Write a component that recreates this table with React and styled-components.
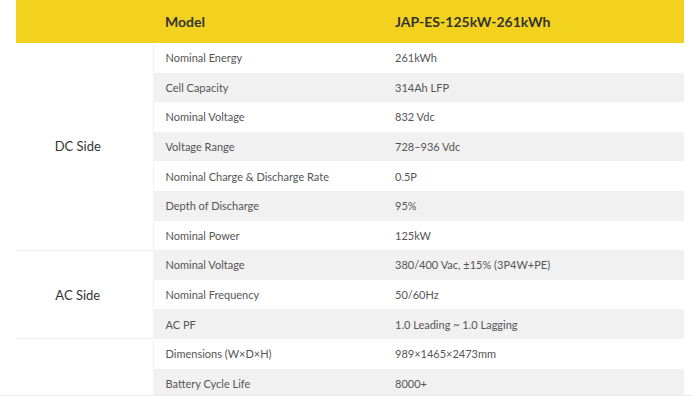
import styled, { createGlobalStyle } from "styled-components";

const GlobalStyle = createGlobalStyle`
  html, body {
    margin: 0;
    padding: 0;
    background: #fff;
  }
  body {
    font-family: Lato, "Open Sans", "Liberation Sans", sans-serif;
    height: 396px;
    overflow: hidden;
  }
`;

const groups = [
  {
    name: "DC Side",
    rows: [
      ["Nominal Energy", "261kWh"],
      ["Cell Capacity", "314Ah LFP"],
      ["Nominal Voltage", "832 Vdc"],
      ["Voltage Range", "728–936 Vdc"],
      ["Nominal Charge & Discharge Rate", "0.5P"],
      ["Depth of Discharge", "95%"],
      ["Nominal Power", "125kW"],
    ],
  },
  {
    name: "AC Side",
    rows: [
      ["Nominal Voltage", "380/400 Vac, ±15% (3P4W+PE)"],
      ["Nominal Frequency", "50/60Hz"],
      ["AC PF", "1.0 Leading ~ 1.0 Lagging"],
    ],
  },
  {
    name: "",
    rows: [
      ["Dimensions (W×D×H)", "989×1465×2473mm"],
      ["Battery Cycle Life", "8000+"],
    ],
  },
];

function App() {
  let index = 0;
  return (
    <>
      <GlobalStyle />
      <Page>
        <Table>
          <colgroup>
            <col style={{ width: 137 }} />
            <col style={{ width: 230 }} />
            <col />
          </colgroup>
          <thead>
            <tr>
              <HeadCell />
              <HeadCell>Model</HeadCell>
              <HeadCell>JAP-ES-125kW-261kWh</HeadCell>
            </tr>
          </thead>
          <tbody>
            {groups.map((group) =>
              group.rows.map(([label, value], i) => {
                index += 1;
                const striped = index % 2 === 0;
                return (
                  <Row key={group.name + label}>
                    {i === 0 && (
                      <GroupCell rowSpan={group.rows.length}>
                        {group.name}
                      </GroupCell>
                    )}
                    <Cell $striped={striped}>{label}</Cell>
                    <Cell $striped={striped}>{value}</Cell>
                  </Row>
                );
              })
            )}
          </tbody>
        </Table>
        <BottomLine />
      </Page>
    </>
  );
}

export default App;

const Page = styled.div`
  position: relative;
  height: 396px;
  padding: 0 8px 0 16px;
  overflow: hidden;
`;

const Table = styled.table`
  width: 668px;
  border-collapse: collapse;
  table-layout: fixed;
`;

const HeadCell = styled.th`
  height: 43px;
  padding: 0 12px;
  background-color: #f3d11f;
  color: #333;
  font-size: 14px;
  font-weight: 700;
  text-align: left;
  vertical-align: middle;
`;

const Row = styled.tr`
  height: 29.6px;
`;

const GroupCell = styled.td`
  padding: 0 13px 0 0;
  text-align: center;
  vertical-align: middle;
  font-size: 13px;
  color: #333;
  border-bottom: 1px solid #f1f1f1;
  border-right: 1px solid #f1f1f1;
`;

const Cell = styled.td`
  height: 29.6px;
  padding: 0 12px;
  font-size: 11px;
  color: #555;
  white-space: nowrap;
  vertical-align: middle;
  background-color: ${(p) => (p.$striped ? "#f1f1f1" : "#fff")};
`;

const BottomLine = styled.div`
  position: absolute;
  left: 0;
  right: 0;
  top: 395px;
  height: 1px;
  background: #eaeaea;
`;
